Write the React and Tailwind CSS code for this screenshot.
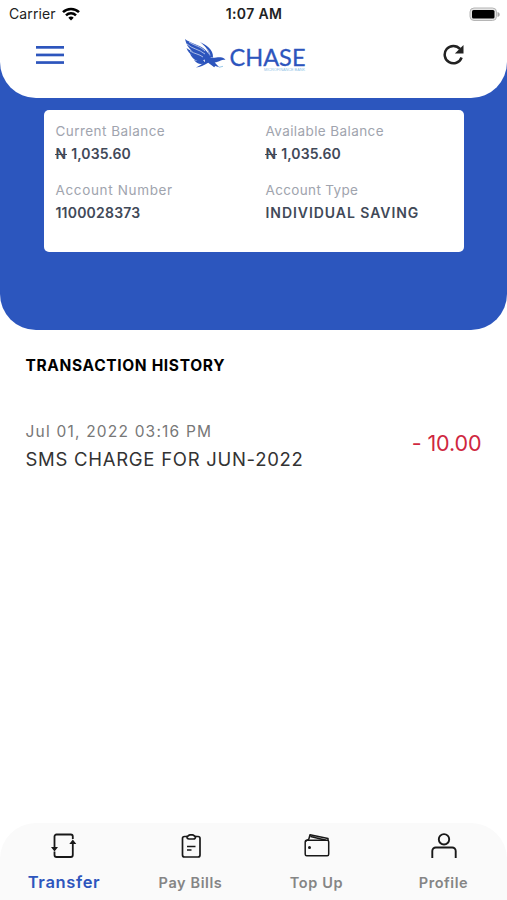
import React from "react"

const ACCOUNT = [
  { label: "Current Balance", value: "1,035.60", naira: true, labelTrack: "tracking-[0.45px]", valueTrack: "tracking-[0.1px]" },
  { label: "Available Balance", value: "1,035.60", naira: true, labelTrack: "tracking-[0.4px]", valueTrack: "tracking-[0.1px]" },
  { label: "Account Number", value: "1100028373", labelTrack: "tracking-[0.65px]", valueTrack: "tracking-[0.2px]" },
  { label: "Account Type", value: "INDIVIDUAL SAVING", labelTrack: "tracking-[0.35px]", valueTrack: "tracking-[0.95px]" },
]

function StatusBar() {
  return (
    <div className="grid h-7 grid-cols-3 items-center pl-[9px] pr-[7px] text-[#222]">
      <div className="flex items-center gap-[6px]">
        <span className="text-[14px] leading-none tracking-[0.1px]">Carrier</span>
        <svg className="h-[14px] w-[18px]" viewBox="0 0 18 14" fill="none" stroke="#000" strokeWidth="2.5">
          <path d="M1 5.2C5.3.8 12.7.8 17 5.2" />
          <path d="M4 8.3c2.8-2.7 7.2-2.7 10 0" />
          <path d="M6.3 10.7c1.5-1.5 3.9-1.5 5.4 0L9 13.6z" fill="#000" stroke="none" />
        </svg>
      </div>
      <span className="-ml-px text-center text-[14px] font-semibold leading-none tracking-[0.35px]">1:07 AM</span>
      <svg className="h-[15px] w-[31px] justify-self-end" viewBox="0 0 31 15">
        <rect x="1" y="1" width="26.5" height="12.5" rx="4" fill="#e4e4e4" stroke="#b5b5b5" />
        <rect x="3" y="3" width="22.5" height="8.5" rx="1.5" fill="#000" />
        <path d="M28.5 5c1.7.5 2.2 1.500 2.200 2.500s-.5 2-2.200 2.500z" fill="#a5a5a5" />
      </svg>
    </div>
  )
}

function Logo() {
  return (
    <svg className="h-[36px] w-[124px]" viewBox="0 0 124 36">
      <g fill="#2d55bd">
        <path d="M1 2C6 6 14 7.500 19 11c3 2.200 5 5 8 9l-3 4-7-3C11 17 3 12 1 2z" />
        <path d="M2.500 11C7 15 15 16 22 21l-3 2C11 21 5 18 2.500 11z" />
        <path d="M6 17c5 3 9 3 14 5l-1 3c-5 0-10-2-13-8z" />
        <path d="M10 23c4 1.500 7 1 10 1l1 2c-4 2-8 1-11-3z" />
        <path d="M16 5c6 3 13.500 7 13 15.500L25 20c0-6-3-10-9-15z" />
        <path d="M20 20c3-.5 5 .5 8.500.7 3 .1 5-.7 8-.5 2.200.1 3.800.8 5 2.600-2-.4-3.500 0-4.800.8-2 1.200-4 1.600-6 2l4.500 4.700-4-1.200-1 1.200-6-4.500C20 28 16 30.500 12 30.500c4-2 7-4 9-6z" />
      </g>
      <g fill="none" stroke="#fff" strokeWidth="0.6">
        <path d="M3 7c5 5 12 5 18 10" />
        <path d="M5 5c6 4 11 4 16 9" />
        <path d="M6 14c5 3 9 3 13 6" />
        <path d="M20 9.500c4 3 5 5 6 9" />
      </g>
      <path d="M35 30.300l4-1" stroke="#8fc4e6" strokeWidth="0.9" />
      <text x="45.500" y="28.500" textLength="76" lengthAdjust="spacingAndGlyphs" fill="#2d55bd" stroke="#2d55bd" strokeWidth="0.3" className="font-['Lato'] text-[24px]">
        CHASE
      </text>
      <text x="80" y="33.800" textLength="41" lengthAdjust="spacingAndGlyphs" fill="#8fc4e6" className="font-['Liberation_Sans'] text-[3.5px]">
        MICROFINANCE BANK
      </text>
    </svg>
  )
}

function Header() {
  return (
    <header className="h-[98px] rounded-b-[36px] bg-white">
      <StatusBar />
      <div className="flex h-[54px] items-center pl-9 pr-[42px]">
        <svg className="h-[18px] w-7" viewBox="0 0 28 18" fill="#2d55bd">
          <rect y="0" width="28" height="2.700" />
          <rect y="7.600" width="28" height="2.700" />
          <rect y="15.200" width="28" height="2.700" />
        </svg>
        <div className="ml-[120px] flex-1">
          <Logo />
        </div>
        <svg className="h-[22px] w-[22px]" viewBox="0 0 22 22">
          <path d="M17 4.900A8.700 8.700 0 1 0 18.600 13.500" fill="none" stroke="#222" strokeWidth="2.500" />
          <path d="M20.500 1v8.600h-8.600z" fill="#222" />
        </svg>
      </div>
    </header>
  )
}

function Naira() {
  return (
    <span className="relative mr-[5px] inline-block tracking-normal">
      N
      <span className="absolute -left-px -right-px top-[9px] h-px bg-[#414958]" />
    </span>
  )
}

function BalanceCard() {
  return (
    <section className="mx-auto mt-3 grid h-[142px] w-[420px] grid-cols-[210px_1fr] content-start gap-y-[23px] rounded-[5px] bg-white pl-[12px] pt-[11.5px]">
      {ACCOUNT.map((item) => (
        <div key={item.label}>
          <div className={`text-[13.5px] leading-[18px] text-[#a0a4ae] ${item.labelTrack}`}>{item.label}</div>
          <div className={`mt-[5px] h-[13px] whitespace-nowrap text-[14px] font-semibold leading-[18px] text-[#414958] ${item.valueTrack}`}>
            {item.naira && <Naira />}
            {item.value}
          </div>
        </div>
      ))}
    </section>
  )
}

function TransferIcon() {
  return (
    <svg className="h-[26px] w-[26px]" viewBox="0 0 26 26" fill="none" stroke="#181818" strokeWidth="1.8">
      <path d="M3.500 14.500V3.500a2 2 0 0 1 2-2h14.300a2 2 0 0 1 2 2V6" />
      <path d="M3.500 18.500v3.500a2 2 0 0 0 2 2h14.300a2 2 0 0 0 2-2V9" />
      <path d="M0 14h7l-3.500 4.500zM18.300 11h7l-3.500-4.500z" fill="#181818" stroke="none" />
    </svg>
  )
}

function BillsIcon() {
  return (
    <svg className="h-[26px] w-[26px]" viewBox="0 0 26 26" fill="none" stroke="#181818" strokeWidth="1.7">
      <rect x="4.500" y="3.500" width="17.500" height="20.500" rx="2" />
      <path d="M9 3.500c0 2 .5 2.500 2 2.500h4.500c1.500 0 2-.5 2-2.500-1.500 0-1.500-1.700-3-1.700H12c-1.500 0-1.500 1.700-3 1.700z" fill="#fafafa" />
      <path d="M9 13.500h8.500M9 17h4.500" />
    </svg>
  )
}

function WalletIcon() {
  return (
    <svg className="h-[26px] w-[26px]" viewBox="0 0 26 26" fill="none" stroke="#181818" strokeWidth="1.5" strokeLinejoin="round">
      <rect x="1.200" y="7.300" width="23.500" height="15.500" rx="1.500" />
      <path d="M1.500 8.500C3 6.500 5 7 5 5.500l1-3.700L24 5.500v2.500M6.500 3.500L22 7.300" />
      <circle cx="5.500" cy="14.500" r="1.500" fill="#181818" stroke="none" />
    </svg>
  )
}

function ProfileIcon() {
  return (
    <svg className="h-[26px] w-[26px]" viewBox="0 0 26 26" fill="none" stroke="#181818" strokeWidth="1.9">
      <circle cx="13" cy="6.300" r="5.200" />
      <path d="M1.300 25v-7a3.500 3.500 0 0 1 3.500-3.500h16.400a3.500 3.500 0 0 1 3.500 3.500V25" />
    </svg>
  )
}

const TABS = [
  { name: "Pay Bills", Icon: BillsIcon, track: "tracking-[0.6px]" },
  { name: "Top Up", Icon: WalletIcon, track: "tracking-[0.65px]" },
  { name: "Profile", Icon: ProfileIcon, track: "tracking-[0.55px]" },
]

function BottomNav() {
  return (
    <nav className="grid h-[77px] grid-cols-[128px_125px_127px_127px] rounded-t-[36px] bg-[#fafafa] pt-[10px]">
      <a className="flex flex-col items-center">
        <TransferIcon />
        <span className="mt-[13px] text-[16.5px] font-semibold leading-5 tracking-[0.65px] text-[#2d55bd]">Transfer</span>
      </a>
      {TABS.map(({ name, Icon, track }) => (
        <a key={name} className="flex flex-col items-center">
          <Icon />
          <span className={`mt-[14px] text-[14.5px] font-semibold leading-5 text-[#858585] ${track}`}>{name}</span>
        </a>
      ))}
    </nav>
  )
}

export default function App() {
  return (
    <div className="flex h-[900px] w-[507px] flex-col overflow-hidden bg-white font-['Inter',sans-serif]">
      <div className="h-[330px] rounded-b-[36px] bg-[#2c56be]">
        <Header />
        <BalanceCard />
      </div>
      <main className="flex-1 px-[25.5px] pt-[26px]">
        <h1 className="text-[15.5px] font-bold leading-5 tracking-[0.65px] text-black">TRANSACTION HISTORY</h1>
        <div className="mt-[45px] flex items-center justify-between">
          <div>
            <div className="text-[15.5px] leading-[22px] tracking-[1.2px] text-[#777]">Jul 01, 2022 03:16 PM</div>
            <div className="mt-[3px] text-[18.5px] leading-[26px] tracking-[0.72px] text-[#333]">SMS CHARGE FOR JUN-2022</div>
          </div>
          <span className="-mt-[7px] text-[21.5px] tracking-[-0.1px] text-[#cf2740]">- 10.00</span>
        </div>
      </main>
      <BottomNav />
    </div>
  )
}
